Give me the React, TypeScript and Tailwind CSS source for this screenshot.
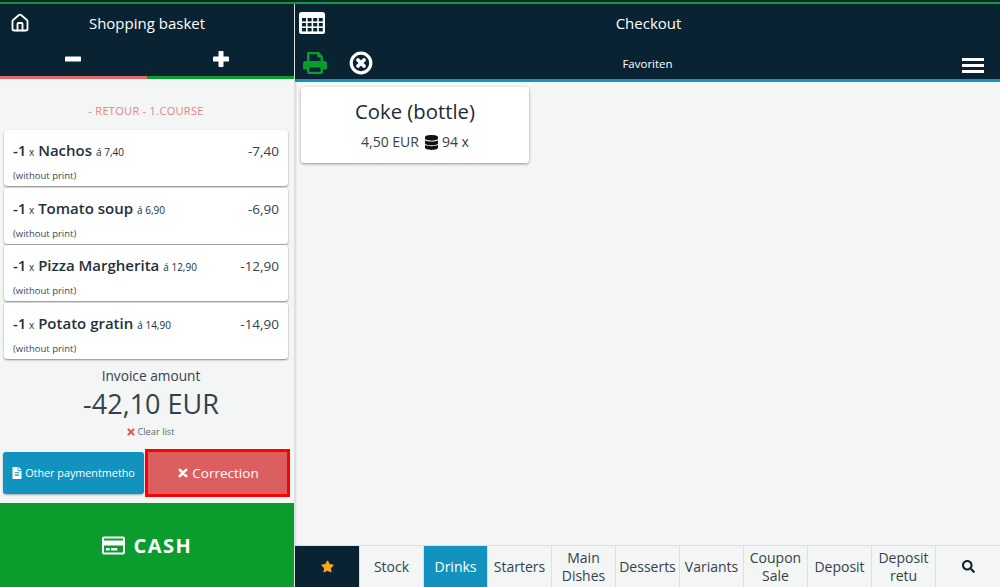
import { FaDatabase, FaFileAlt, FaRegCreditCard, FaSearch, FaStar } from "react-icons/fa";
import { Home } from "lucide-react";

const basketItems = [
  { name: "Nachos", each: "7,40", total: "-7,40" },
  { name: "Tomato soup", each: "6,90", total: "-6,90" },
  { name: "Pizza Margherita", each: "12,90", total: "-12,90" },
  { name: "Potato gratin", each: "14,90", total: "-14,90" },
];

const tabs = ["Stock", "Drinks", "Starters", "Main Dishes", "Desserts", "Variants", "Coupon Sale", "Deposit", "Deposit retu"];

const CrossIcon = ({ className }: { className: string }) => (
  <svg viewBox="0 0 12 12" className={className}>
    <path d="M2.2 2.2l7.6 7.6M9.8 2.2l-7.6 7.6" stroke="currentColor" strokeWidth="3.2" strokeLinecap="round" />
  </svg>
);

const TableIcon = () => (
  <svg viewBox="0 0 26 22" className="absolute left-[4px] top-[8px] w-[26px] h-[22px]">
    <rect width="26" height="22" rx="2.5" fill="white" />
    {[3, 8.6, 14.2, 19.8].map((x) =>
      [6, 11, 16].map((y) => <rect key={`${x}-${y}`} x={x} y={y} width="4" height="3.4" fill="#0a2333" />),
    )}
  </svg>
);

const PrintIcon = () => (
  <svg viewBox="0 0 24 22" className="absolute left-[8px] top-[48px] w-[24px] h-[22px] text-[#0b9c2e]" fill="currentColor">
    <path fillRule="evenodd" d="M5 0h11l4 4.5V9h1.5A2.5 2.5 0 0 1 24 11.5V16a1.5 1.5 0 0 1-1.5 1.5H20V20a2 2 0 0 1-2 2H6a2 2 0 0 1-2-2v-2.5H1.5A1.5 1.5 0 0 1 0 16v-4.5A2.5 2.5 0 0 1 2.500 9H4V1a1 1 0 0 1 1-1zM6.500 2.200V9h11V5.500h-3.300V2.200zM6.500 15.500V19.800h11V15.500z" />
  </svg>
);

const BasketRow = ({ name, each, total }: { name: string; each: string; total: string }) => (
  <div className="h-[56px] bg-white rounded-[3px] shadow-[0_1px_2px_rgba(0,0,0,0.45)] px-[9px] pt-[10px] text-[#22313c]">
    <div className="flex justify-between items-baseline h-[20px] leading-[20px]">
      <div className="whitespace-nowrap">
        <span className="text-[15px] font-semibold text-[#22313c]">-1</span>
        <span className="text-[10px] ml-[2.500px] mr-[4px]">x</span>
        <span className="text-[15px] font-semibold text-[#22313c]">{name}</span>
        <span className="text-[10px] ml-[4px]">á {each}</span>
      </div>
      <span className="text-[13.500px] text-[#33424d]">{total}</span>
    </div>
    <div className="text-[9.500px] leading-[12px] mt-[10px] text-[#3c4a55]">(without print)</div>
  </div>
);

export default function App() {
  return (
    <div className="w-[1000px] h-[587px] overflow-hidden flex flex-col bg-[#f4f5f5] font-['Open_Sans',sans-serif]">
      <div className="h-[2px] bg-[#0a2333]" />
      <div className="h-[2px] bg-[#0b9c2e]" />
      <div className="flex flex-1 min-h-0">
        <aside className="w-[295px] shrink-0 flex flex-col border-r border-[#dfe1e1] shadow-[1px_0_2px_rgba(0,0,0,0.12)] z-10">
          <header className="h-[72px] shrink-0 bg-[#0a2333] text-white relative">
            <Home className="absolute left-[10px] top-[9px] w-[20px] h-[20px]" strokeWidth={2.2} />
            <div className="pt-[9px] text-center text-[15px] leading-[20px]">Shopping basket</div>
            <svg viewBox="0 0 16 16" className="absolute left-[65px] top-[47px] w-[16px] h-[16px]">
              <path d="M1.500 8h13" stroke="white" strokeWidth="5" strokeLinecap="round" />
            </svg>
            <svg viewBox="0 0 16 16" className="absolute left-[213px] top-[47px] w-[16px] h-[16px]">
              <path d="M1.500 8h13M8 1.500v13" stroke="white" strokeWidth="5" strokeLinecap="round" />
            </svg>
          </header>
          <div className="flex h-[3px] shrink-0">
            <div className="w-[147px] bg-[#e8686a]" />
            <div className="flex-1 bg-[#0b9c2e]" />
          </div>
          <div className="flex-1 flex flex-col min-h-0">
            <div className="h-[51px] pt-[25px] pr-[2px] shrink-0 text-center text-[11px] leading-[14px] tracking-[0.3px] text-[#e08585]">- RETOUR - 1.COURSE</div>
            <div className="flex flex-col gap-[1.600px] pl-[4px] pr-[6px]">
              {basketItems.map((item) => (
                <BasketRow key={item.name} {...item} />
              ))}
            </div>
            <div className="text-center text-[#33424d] pl-[8px]">
              <div className="text-[13.700px] leading-[20px] mt-[7px]">Invoice amount</div>
              <div className="text-[27px] leading-[36px] mt-[0px]">-42,10 EUR</div>
              <div className="text-[9.300px] leading-[12px] mt-[4px] text-[#5c6870] flex justify-center items-center gap-[2px]">
                <CrossIcon className="w-[8px] h-[8px] text-[#dc5f5f]" />
                Clear list
              </div>
            </div>
            <div className="flex mt-[11px] pl-[3px] items-center">
              <button className="w-[141px] h-[42px] rounded-[3px] bg-[#1292bf] text-white text-[10.800px] flex items-center justify-center gap-[3px] whitespace-nowrap shadow-[0_1px_2px_rgba(0,0,0,0.3)]">
                <FaFileAlt className="w-[10px] h-[12px]" />
                Other paymentmetho
              </button>
              <button className="ml-[1px] w-[145px] h-[48px] pl-[2px] border-[3px] border-[#ff0000] bg-[#dc5f5f] text-white text-[13.500px] flex items-center justify-center gap-[4px]">
                <CrossIcon className="w-[10px] h-[10px]" />
                Correction
              </button>
            </div>
            <button className="mt-[6px] h-[84px] pt-[2px] shrink-0 bg-[#0b9c2e] text-white flex items-center justify-center gap-[9px] text-[20px] font-bold tracking-[1.500px]">
              <FaRegCreditCard className="w-[23px] h-[23px]" />
              CASH
            </button>
          </div>
        </aside>

        <main className="flex-1 min-w-0 flex flex-col">
          <header className="h-[75px] shrink-0 bg-[#0a2333] text-white relative">
            <TableIcon />
            <div className="pt-[9px] pl-[2px] text-center text-[15px] leading-[20px]">Checkout</div>
            <PrintIcon />
            <svg viewBox="0 0 24 24" className="absolute top-[47px] left-[54px] w-[24px] h-[24px]">
              <circle cx="12" cy="12" r="9.800" fill="none" stroke="white" strokeWidth="3.200" />
              <path d="M9 9l6 6M15 9l-6 6" stroke="white" strokeWidth="3.800" strokeLinecap="round" />
            </svg>
            <div className="absolute top-[52px] left-0 right-0 text-center text-[11.500px] leading-[16px]">Favoriten</div>
            <div className="absolute right-[16px] top-[54px] w-[22px] flex flex-col gap-[3px]">
              <div className="h-[3px] bg-white" />
              <div className="h-[3px] bg-white" />
              <div className="h-[3px] bg-white" />
            </div>
          </header>
          <div className="h-[3px] shrink-0 bg-[#1292bf]" />
          <div className="flex-1 min-h-0 pl-[6px] pt-[5px]">
            <div className="w-[228px] h-[76px] bg-white rounded-[3px] shadow-[0_1px_3px_rgba(0,0,0,0.4)] text-center text-[#1b2a36]">
              <div className="text-[20.300px] leading-[27px] pt-[11px] h-[41px]">Coke (bottle)</div>
              <div className="text-[14px] leading-[20px] mt-[4px] flex justify-center items-center gap-[6px] text-[#33424d]">
                4,50 EUR
                <span className="flex items-center gap-[4px]">
                  <FaDatabase className="w-[13px] h-[15px] text-[#111]" />
                  94 x
                </span>
              </div>
            </div>
          </div>
          <nav className="h-[42px] shrink-0 flex border-t border-[#dcdfdf]">
            <div className="w-[64px] bg-[#0a2333] flex items-center justify-center">
              <FaStar className="w-[13px] h-[13px] text-[#f5a623]" />
            </div>
            {tabs.map((tab) => (
              <div
                key={tab}
                className={`w-[64px] flex items-center justify-center text-center text-[14px] leading-[18px] border-l border-[#dcdfdf] ${tab === "Drinks" ? "bg-[#1292bf] text-white" : "text-[#33424d]"}`}
              >
                <span className="block w-[62px]">{tab}</span>
              </div>
            ))}
            <div className="w-[65px] flex items-center justify-center border-l border-[#dcdfdf]">
              <FaSearch className="w-[13px] h-[13px] text-[#0a2333]" />
            </div>
          </nav>
        </main>
      </div>
    </div>
  );
}
